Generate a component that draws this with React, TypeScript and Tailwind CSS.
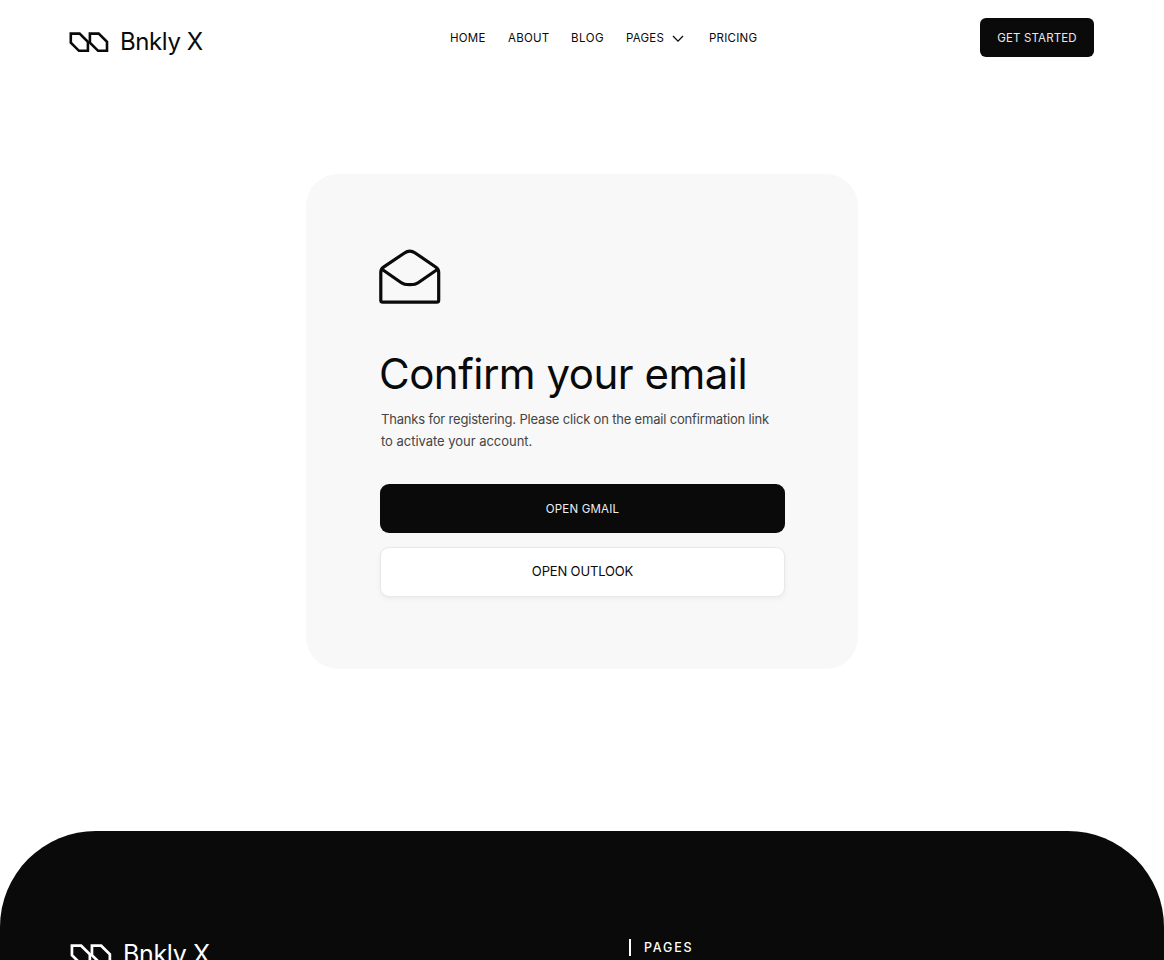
function LogoMark({ className }: { className?: string }) {
  return (
    <svg viewBox="0 0 40 21" fill="none" stroke="currentColor" strokeWidth="2.6" className={className}>
      <path d="M1.8 1.6H10.6L18.9 9.9V18.8H10L1.8 10.6Z" />
      <path d="M20.9 1.6H29.7L38 9.9V18.8H29.1L20.9 10.6Z" />
    </svg>
  );
}

function MailIcon() {
  return (
    <svg width="64" height="58" viewBox="0 0 64 58" fill="none" stroke="currentColor" strokeWidth="3.2" strokeLinejoin="round" className="ml-[-2px] block">
      <path d="M2.8 24.5C2.8 22.3 3.7 20.4 5.5 19.2L26.5 5C30 2.4 33.500 2.400 37.200 5L58 19.200C59.800 20.400 60.700 22.300 60.700 24.500V52.200Q60.700 54.200 58.700 54.200H4.800Q2.800 54.200 2.800 52.200Z" />
      <path d="M3.600 21L23 34.500C25.500 36.400 27.500 36.700 31.750 36.700C36 36.700 38 36.400 40.500 34.500L60 21" />
    </svg>
  );
}

export default function App() {
  return (
    <div className="flex h-[960px] flex-col overflow-hidden bg-white font-['Inter',sans-serif] text-[#0a0a0a]">
      <header className="flex h-[75px] shrink-0 items-start">
        <a className="ml-[69px] mt-[28px] flex w-[381px] items-center">
          <LogoMark className="h-[21px] w-[40px]" />
          <span className="ml-[11px] whitespace-nowrap text-[24px] leading-[28px] tracking-[-0.4px]">Bnkly X</span>
        </a>
        <nav className="mt-[30px] flex w-[530px] whitespace-nowrap text-[11.5px] leading-[17px] tracking-[0.25px]">
          <a className="w-[58px]">HOME</a>
          <a className="w-[63px]">ABOUT</a>
          <a className="w-[55px] tracking-[0.5px]">BLOG</a>
          <a className="flex w-[83px] items-center">
            <span className="w-[46px]">PAGES</span>
            <svg width="12" height="8" viewBox="0 0 12 8" fill="none" stroke="currentColor" strokeWidth="1.3">
              <path d="M1 1L6 6.100L11 1" />
            </svg>
          </a>
          <a>PRICING</a>
        </nav>
        <button className="mt-[18px] h-[39px] w-[114px] rounded-[6px] bg-[#0a0a0a] pt-[2px] text-[11.5px] tracking-[0.15px] text-[#e8e8e8]">GET STARTED</button>
      </header>

      <main className="mt-[99px] flex h-[657px] shrink-0 items-start justify-center">
        <section className="h-[495px] w-[552px] rounded-[32px] bg-[#f8f8f8] px-[74px] pt-[74px]">
          <MailIcon />
          <h1 className="ml-[-1px] mt-[42px] whitespace-nowrap text-[42px] leading-[52px] tracking-[-0.5px]">Confirm your email</h1>
          <p className="ml-px mt-[8px] whitespace-nowrap text-[13px] leading-[22px] text-[#444]">
            <span className="tracking-[-0.18px]">Thanks for registering. Please click on the email confirmation link</span>
            <br />
            <span className="tracking-[-0.03px]">to activate your account.</span>
          </p>
          <button className="mt-[32px] block h-[49px] w-[405px] rounded-[9px] bg-[#0a0a0a] pt-[2px] text-[11.5px] tracking-[0.2px] text-[#eeeeee]">OPEN GMAIL</button>
          <button className="mt-[14px] block h-[50px] w-[405px] rounded-[9px] border border-[#e8e8e8] bg-white text-[13px] tracking-[-0.15px] shadow-[0_2px_5px_rgba(0,0,0,0.05)]">OPEN OUTLOOK</button>
        </section>
      </main>

      <footer className="flex h-[320px] shrink-0 items-start rounded-t-[96px] bg-[#0a0a0a] text-white">
        <div className="ml-[70px] mt-[108px] flex w-[559px] items-center">
          <LogoMark className="mt-[2px] h-[22px] w-[42px]" />
          <span className="ml-[11px] whitespace-nowrap text-[25px] leading-[30px] tracking-[-0.35px]">Bnkly X</span>
        </div>
        <div className="mt-[108px] flex items-center">
          <span className="h-[17px] w-[2px] bg-white" />
          <h2 className="ml-[13px] whitespace-nowrap text-[12.5px] font-medium leading-[16px] tracking-[1.8px]">PAGES</h2>
        </div>
      </footer>
    </div>
  );
}
